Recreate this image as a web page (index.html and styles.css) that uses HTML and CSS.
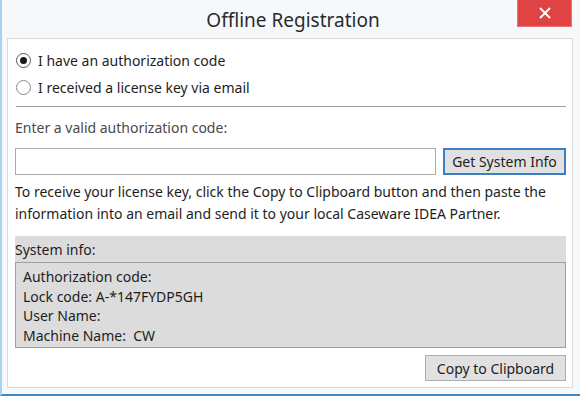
FILE: index.html
```html
<!DOCTYPE html>
<html lang="en">
<head>
    <meta charset="UTF-8">
    <title>Offline Registration</title>
    <link rel="stylesheet" href="styles.css">
</head>
<body>

<div class="window">
    <div class="titlebar">
        <span class="title">Offline Registration</span>
        <div class="close-btn">
            <svg width="12" height="12" viewBox="0 0 12 12">
                <path d="M1 1 L11 11 M11 1 L1 11" stroke="#fff" stroke-width="2"/>
            </svg>
        </div>
    </div>

    <div class="panel">
        <div class="option">
            <span class="radio checked"></span>
            <span>I have an authorization code</span>
        </div>
        <div class="option">
            <span class="radio"></span>
            <span>I received a license key via email</span>
        </div>

        <hr class="separator">

        <div class="field-label">Enter a valid authorization code:</div>

        <div class="code-row">
            <div class="code-input"></div>
            <button class="btn btn-focused">Get System Info</button>
        </div>

        <p class="info-text">To receive your license key, click the Copy to Clipboard button and then paste the information into an email and send it to your local Caseware IDEA Partner.</p>

        <div class="sysinfo">
            <div class="sysinfo-label">System info:</div>
            <div class="sysinfo-box">
                <div>Authorization code:</div>
                <div>Lock code: A-*147FYDP5GH</div>
                <div>User Name:</div>
                <div>Machine Name:&nbsp; CW</div>
            </div>
        </div>

        <div class="bottom-row">
            <button class="btn">Copy to Clipboard</button>
        </div>
    </div>
</div>

</body>
</html>
```

FILE: styles.css
```css
html, body {
    margin: 0;
    padding: 0;
}
body {
    width: 580px;
    height: 396px;
    overflow: hidden;
    font-family: "Noto Sans", "Open Sans", sans-serif;
    font-size: 14px;
    color: #1e1e1e;
    background-color: #f6f9fc;
}
.window {
    position: relative;
    height: 396px;
    box-sizing: border-box;
    border-left: 2px solid #a9d2f0;
    border-bottom: 2px solid #3f86c6;
}
.titlebar {
    height: 38px;
    display: flex;
    justify-content: center;
    align-items: center;
}
.title {
    font-size: 19px;
    color: #2b2b2b;
    margin-left: 4px;
    margin-top: 1px;
}
.close-btn {
    position: absolute;
    top: 0;
    left: 515px;
    width: 55px;
    height: 27px;
    background-color: #e04343;
    border: 1px solid #ea7272;
    border-top: none;
    box-sizing: border-box;
    display: flex;
    justify-content: center;
    align-items: center;
}
.panel {
    margin-left: 5px;
    width: 566px;
    height: 350px;
    box-sizing: border-box;
    background-color: #ffffff;
    border: 1px solid #dadada;
    padding: 8px 6px 0 7px;
}
.option {
    display: flex;
    align-items: center;
    gap: 7px;
    height: 27px;
    padding-left: 1px;
}
.radio {
    width: 13px;
    height: 13px;
    border: 1px solid #5a5a5a;
    border-radius: 50%;
    box-sizing: content-box;
    position: relative;
    background: #fff;
    flex: none;
}
.option + .option .radio {
    border-color: #8a8a8a;
}
.radio.checked::after {
    content: "";
    position: absolute;
    left: 3px;
    top: 3px;
    width: 7px;
    height: 7px;
    border-radius: 50%;
    background-color: #1a1a1a;
}
.separator {
    border: none;
    border-top: 1px solid #a0a0a0;
    margin: 5px 0 0 1px;
    height: 0;
}
.field-label {
    color: #4a4a4a;
    margin-top: 11px;
    height: 20px;
    line-height: 20px;
}
.code-row {
    display: flex;
    gap: 7px;
    margin-top: 10px;
}
.code-input {
    flex: 1;
    height: 27px;
    box-sizing: border-box;
    border: 1px solid #ababab;
    background: #fff;
}
.btn {
    font-family: inherit;
    font-size: 14px;
    color: #1e1e1e;
    background-color: #e1e1e1;
    border: 1px solid #adadad;
    padding: 0;
    height: 27px;
    margin: 0;
    white-space: nowrap;
}
.btn-focused {
    width: 123px;
    flex: none;
    border: 2px solid #3b7fc4;
}
.info-text {
    margin: 6px 0 0;
    line-height: 22px;
}
.sysinfo {
    margin-top: 11px;
    background-color: #dcdcdc;
}
.sysinfo-label {
    height: 26px;
    line-height: 27px;
}
.sysinfo-box {
    border: 1px solid #a0a0a0;
    padding: 4px 7px 2px;
    line-height: 19.5px;
}
.bottom-row {
    display: flex;
    justify-content: flex-end;
    margin-top: 7px;
}
.bottom-row .btn {
    width: 141px;
    height: 26px;
}
```
